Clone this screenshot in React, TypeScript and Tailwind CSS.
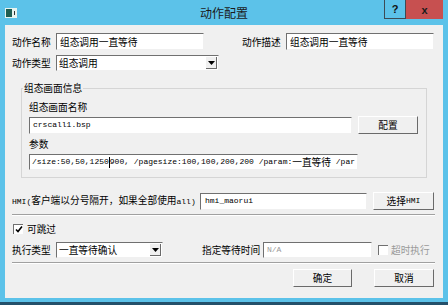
import React from 'react';

const mono = "font-['Liberation_Mono','Noto_Sans_CJK_SC',monospace] text-[8px]";
const sunken = 'border-t border-l border-[#707070] border-r-[#f0f0f0] border-b-[#f0f0f0] border-r border-b bg-white';
const raised = 'border border-t-white border-l-white border-r-[#6a6a6a] border-b-[#6a6a6a] bg-[#f0f0f0] flex items-center justify-center';

function Arrow() {
  return (
    <span className="ml-auto mr-[1px] w-[11px] h-[12px] flex items-center justify-center border-r border-b border-[#6a6a6a] bg-[#f0f0f0]">
      <svg width="7" height="4" viewBox="0 0 7 4">
        <path d="M0 0h7L3.5 4z" fill="#000" />
      </svg>
    </span>
  );
}

function Check({ checked }: { checked?: boolean }) {
  return (
    <span className="w-[10px] h-[10px] border-t border-l border-[#707070] bg-white flex items-center justify-center">
      {checked && (
        <svg width="8" height="7" viewBox="0 0 8 7">
          <path d="M1 3.5l2 2 4-5" stroke="#000" strokeWidth="1.6" fill="none" />
        </svg>
      )}
    </span>
  );
}

export default function App() {
  return (
    <div className="w-[448px] h-[305px] bg-[#5cc2e9] flex flex-col text-[9.7px] leading-[12px] text-black font-['Noto_Sans_CJK_SC',sans-serif]">
      {/* title bar */}
      <div className="h-[25px] grid grid-cols-[1fr_auto_1fr]">
        <div className="pl-[5px] flex items-center pt-[1px]">
          <svg width="12" height="10" viewBox="0 0 12 10">
            <rect x="0" y="0" width="12" height="10" fill="#e8f3ef" />
            <rect x="1" y="1" width="6" height="8" fill="#1f5e52" />
            <rect x="9" y="3" width="1" height="4" fill="#333" />
          </svg>
        </div>
        <div className="flex items-center text-[12px] text-[#1b1b1b]">动作配置</div>
        <div className="flex justify-end items-start pr-[5px]">
          <div className="w-[22px] h-[19px] border border-t-0 border-[#3d4b55] flex items-center justify-center font-['Liberation_Sans',sans-serif] font-bold text-[11px] text-[#111]">?</div>
          <div className="w-[37px] h-[19px] bg-[#c75050] flex items-center justify-center font-['Liberation_Sans',sans-serif] font-bold text-[11px] text-[#1a1a1a]">x</div>
        </div>
      </div>

      {/* content */}
      <div className="mx-[5px] h-[273px] bg-[#f0f0f0] px-[7px] pt-[8px]">
        <div className="h-[17px] flex items-center">
          <span className="w-[44px]">动作名称</span>
          <div className={`w-[148px] h-[17px] pl-[3px] flex items-center ${sunken}`}>组态调用一直等待</div>
          <span className="ml-[38px] w-[44px]">动作描述</span>
          <div className={`w-[148px] h-[17px] pl-[3px] flex items-center ${sunken}`}>组态调用一直等待</div>
        </div>
        <div className="mt-[5px] h-[16px] flex items-center">
          <span className="w-[44px]">动作类型</span>
          <div className={`w-[163px] h-[16px] pl-[2px] flex items-center ${sunken}`}>
            组态调用
            <Arrow />
          </div>
        </div>

        {/* group box */}
        <div className="mt-[17px] ml-[9px] w-[406px] relative border border-[#d5d5d5] pt-[12px] pl-[7px] pb-[7px]">
          <span className="absolute top-[-7px] left-[1px] px-[1px] bg-[#f0f0f0]">组态画面信息</span>
          <div>组态画面名称</div>
          <div className="mt-[3px] h-[18px] flex items-center">
            <div className={`w-[323px] h-[17px] pl-[3px] flex items-center ${sunken} ${mono}`}>crscall1.bsp</div>
            <div className={`ml-[6px] w-[60px] h-[18px] ${raised}`}>配置</div>
          </div>
          <div className="mt-[4px]">参数</div>
          <div className={`mt-[4px] w-[329px] h-[16px] pl-[2px] flex items-center overflow-hidden whitespace-nowrap ${sunken}`}>
            <span className={mono}>/size:50,50,1250</span>
            <span className="inline-block w-[1px] h-[11px] bg-black" />
            <span className={mono}>900,&nbsp;/pagesize:100,100,200,200&nbsp;/param:</span>
            <span>一直等待</span>
            <span className={mono}>&nbsp;/par</span>
          </div>
        </div>

        {/* HMI */}
        <div className="mt-[14px] h-[18px] flex items-center">
          <span className="w-[188px] whitespace-nowrap">
            <span className={mono}>HMI(</span>客户端以分号隔开，如果全部使用<span className={mono}>all)</span>
          </span>
          <div className={`w-[167px] h-[17px] pl-[4px] flex items-center ${sunken} ${mono}`}>hmi_maorui</div>
          <div className={`ml-[6px] w-[61px] h-[18px] ${raised}`}>
            选择<span className={mono}>HMI</span>
          </div>
        </div>
        <div className="mt-[4px] w-[423px] border-t border-[#a0a0a0] border-b border-b-white" />

        <div className="mt-[7px] h-[12px] flex items-center">
          <span className="ml-[1px]">
            <Check checked />
          </span>
          <span className="ml-[4px]">可跳过</span>
        </div>

        <div className="mt-[7px] h-[16px] flex items-center">
          <span className="w-[44px]">执行类型</span>
          <div className={`w-[107px] h-[16px] pl-[2px] flex items-center ${sunken}`}>
            一直等待确认
            <Arrow />
          </div>
          <span className="ml-[39px] w-[61px]">指定等待时间</span>
          <div className={`w-[109px] h-[16px] pl-[3px] flex items-center text-[#9a9a9a] ${sunken} ${mono}`}>N/A</div>
          <span className="ml-[6px]">
            <Check />
          </span>
          <span className="ml-[3px] text-[#9a9a9a]">超时执行</span>
        </div>
        <div className="mt-[4px] w-[423px] border-t border-[#a0a0a0] border-b border-b-white" />

        <div className="mt-[5px] flex">
          <div className={`ml-[281px] w-[59px] h-[18px] ${raised}`}>确定</div>
          <div className={`ml-[22px] w-[60px] h-[18px] ${raised}`}>取消</div>
        </div>
      </div>
      <div className="h-[4px]" />
      <div className="h-[3px] bg-[#24506a]" />
    </div>
  );
}
